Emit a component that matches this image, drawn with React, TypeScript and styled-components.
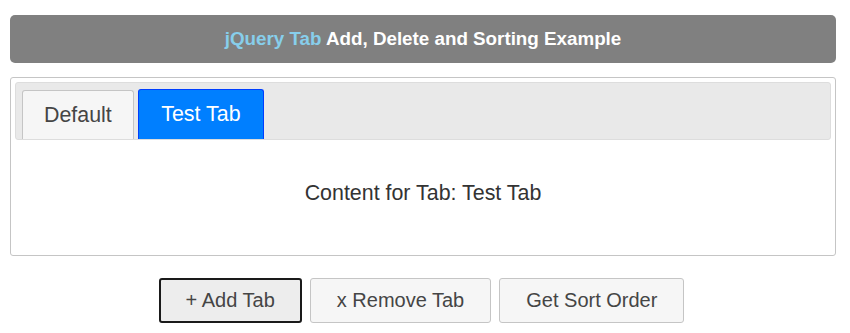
import React, { useState } from "react";
import styled, { createGlobalStyle } from "styled-components";

const GlobalStyle = createGlobalStyle`
  body {
    margin: 0;
    background: #ffffff;
    font-family: "Liberation Sans", Arial, sans-serif;
  }
`;

const Page = styled.div`
  padding: 15px 14px 0 10px;
`;

const Banner = styled.h1`
  margin: 0 0 14px;
  height: 48px;
  display: flex;
  align-items: center;
  justify-content: center;
  white-space: pre;
  background: #808080;
  border-radius: 5px;
  color: #ffffff;
  font-size: 18.8px;
  font-weight: bold;
`;

const Accent = styled.span`
  color: #87ceeb;
`;

const TabsBox = styled.div`
  border: 1px solid #c5c5c5;
  border-radius: 3px;
  padding: 4px 4px 0;
`;

const TabNav = styled.ul`
  display: flex;
  gap: 4px;
  margin: 0;
  padding: 6px 5px 0 6px;
  list-style: none;
  background: #e9e9e9;
  border: 1px solid #dddddd;
  border-radius: 3px;
`;

const TabItem = styled.li<{ $active: boolean }>`
  height: ${({ $active }) => ($active ? "49px" : "48px")};
  padding: 0 ${({ $active }) => ($active ? "22.5px" : "21px")};
  display: flex;
  align-items: center;
  align-self: flex-end;
  font-size: 21.4px;
  border: 1px solid ${({ $active }) => ($active ? "#003eff" : "#c5c5c5")};
  border-bottom: none;
  border-radius: 3px 3px 0 0;
  background: ${({ $active }) => ($active ? "#007fff" : "#f6f6f6")};
  color: ${({ $active }) => ($active ? "#ffffff" : "#454545")};
  cursor: pointer;
`;

const TabPanel = styled.div`
  padding: 42px 20px 50px;
  text-align: center;
  font-size: 21.4px;
  line-height: 23px;
  color: #333333;
`;

const ButtonRow = styled.div`
  display: flex;
  justify-content: center;
  gap: 8px;
  margin-top: 22px;
  padding-right: 3px;
`;

const Button = styled.button<{ $focused?: boolean }>`
  height: 45px;
  padding: 0 ${({ $focused }) => ($focused ? "25px" : "26px")};
  font-family: "Liberation Sans", Arial, sans-serif;
  font-size: 20px;
  color: #454545;
  background: ${({ $focused }) => ($focused ? "#ededed" : "#f6f6f6")};
  border: ${({ $focused }) =>
    $focused ? "2px solid #1a1a1a" : "1px solid #c5c5c5"};
  border-radius: 3px;
  cursor: pointer;
`;

const tabs = [
  { name: "Default", content: "Content for Tab: Default" },
  { name: "Test Tab", content: "Content for Tab: Test Tab" },
];

export default function App() {
  const [active, setActive] = useState(1);
  return (
    <Page>
      <GlobalStyle />
      <Banner>
        <Accent>jQuery Tab</Accent> Add, Delete and Sorting Example
      </Banner>
      <TabsBox>
        <TabNav>
          {tabs.map((t, i) => (
            <TabItem key={t.name} $active={i === active} onClick={() => setActive(i)}>
              {t.name}
            </TabItem>
          ))}
        </TabNav>
        <TabPanel>{tabs[active].content}</TabPanel>
      </TabsBox>
      <ButtonRow>
        <Button $focused>+ Add Tab</Button>
        <Button>x Remove Tab</Button>
        <Button>Get Sort Order</Button>
      </ButtonRow>
    </Page>
  );
}
